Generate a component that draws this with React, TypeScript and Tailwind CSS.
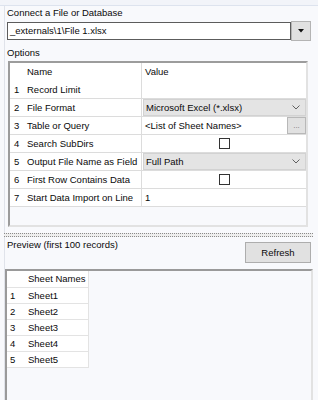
import React from "react";

function Chevron() {
  return (
    <svg width="8" height="5" viewBox="0 0 8 5" className="shrink-0">
      <polyline points="0.5,0.5 4,4 7.5,0.5" fill="none" stroke="#606060" strokeWidth="1" />
    </svg>
  );
}

function Check() {
  return <div className="w-[11px] h-[11px] border border-[#333] bg-white" />;
}

function Combo({ text }: { text: string }) {
  return (
    <div className="ml-[1px] h-[17px] flex-1 flex items-center justify-between bg-[#e4e4e4] border border-[#d2d2d2] pl-[2px] pr-[5px]">
      <span>{text}</span>
      <Chevron />
    </div>
  );
}

const rows: { n: number; name: string; value: React.ReactNode }[] = [
  { n: 1, name: "Record Limit", value: null },
  { n: 2, name: "File Format", value: <Combo text="Microsoft Excel (*.xlsx)" /> },
  {
    n: 3,
    name: "Table or Query",
    value: (
      <div className="flex-1 flex items-start h-full">
        <span className="flex-1 pl-[3px] leading-[17px]">&lt;List of Sheet Names&gt;</span>
        <div className="w-[19px] h-[17px] bg-[#e1e1e1] border border-[#b8b8b8] flex items-center justify-center text-[#777] text-[8px] leading-[8px]">
          ...
        </div>
      </div>
    ),
  },
  {
    n: 4,
    name: "Search SubDirs",
    value: (
      <div className="flex-1 flex justify-center">
        <Check />
      </div>
    ),
  },
  { n: 5, name: "Output File Name as Field", value: <Combo text="Full Path" /> },
  {
    n: 6,
    name: "First Row Contains Data",
    value: (
      <div className="flex-1 flex justify-center">
        <Check />
      </div>
    ),
  },
  { n: 7, name: "Start Data Import on Line", value: <span className="pl-[3px]">1</span> },
];

export default function App() {
  return (
    <div className="w-[318px] h-[400px] overflow-hidden bg-[#f8f9fc] text-[9.5px] leading-[12px] text-[#0a0a0a] font-['Liberation_Sans',Arial,sans-serif]">
      <div className="h-[6px] bg-[#f2f4f9] border-b border-[#dde3ee]" />
      <div className="ml-[4px] border-l border-[#e0e3ea] pl-[2px] h-[394px]">
        <div className="pt-[1px] h-[13px]">Connect a File or Database</div>
        <div className="flex items-start mt-[2px]">
          <div className="mt-[1px] w-[284px] h-[18px] bg-white border border-[#5c5c5c] pl-[2px] flex items-center">
            _externals\1\File 1.xlsx
          </div>
          <div className="w-[20px] h-[20px] bg-[#e1e1e1] border border-[#b4b4b4] flex items-center justify-center">
            <svg width="6" height="4" viewBox="0 0 6 4">
              <polygon points="0,0 6,0 3,3.5" fill="#111" />
            </svg>
          </div>
        </div>
        <div className="mt-[6px] h-[12px]">Options</div>
        <div className="mt-[2px] ml-[1px] w-[300px] h-[166px] border-t-2 border-l-2 border-[#9c9c9c] border-r-2 border-b-2 border-r-[#e2e2e2] border-b-[#e2e2e2] bg-[#f8f9fc]">
          <div className="flex h-[18px] items-center bg-white">
            <div className="w-[15px]" />
            <div className="w-[116px] pl-[2px]">Name</div>
            <div className="w-[1px] h-full bg-[#dcdcdc]" />
            <div className="flex-1 pl-[3px]">Value</div>
          </div>
          {rows.map((r) => (
            <div key={r.n} className="flex h-[18px] items-center bg-white border-b border-[#dcdcdc]">
              <div className="w-[15px] pl-[4px]">{r.n}</div>
              <div className="w-[116px] pl-[2px] whitespace-nowrap overflow-hidden">{r.name}</div>
              <div className="w-[1px] h-full bg-[#dcdcdc]" />
              <div className="flex-1 flex items-center h-full">{r.value}</div>
            </div>
          ))}
        </div>
        <div className="mt-[6px] -ml-[3px] w-[309px] h-[4px] border-t border-b border-dotted border-[#8a8a8a] bg-[#eeeeee]" />
        <div className="mt-[2px] w-[304px] flex justify-between items-start">
          <div>Preview (first 100 records)</div>
          <div className="mt-[3px] w-[66px] h-[21px] bg-[#e1e1e1] border border-[#adadad] flex items-center justify-center">
            Refresh
          </div>
        </div>
        <div className="mt-[6px] -ml-[2px] w-[308px] h-[140px] border-t-2 border-l-2 border-[#9a9a9a] border-r-2 border-r-[#e2e2e2] bg-[#f8f9fc]">
          <div className="w-[82px]">
            <div className="flex h-[17px] items-center bg-white border-b border-[#e3e3e3]">
              <div className="w-[17px]" />
              <div className="flex-1 pl-[4px] h-full flex items-center whitespace-nowrap border-r border-[#e3e3e3]">Sheet Names</div>
            </div>
            {[1, 2, 3, 4, 5].map((i) => (
              <div key={i} className="flex h-[16px] items-center bg-white border-b border-[#e3e3e3]">
                <div className="w-[17px] pl-[3px]">{i}</div>
                <div className="flex-1 pl-[4px] h-full flex items-center border-r border-[#e3e3e3]">Sheet{i}</div>
              </div>
            ))}
          </div>
        </div>
      </div>
    </div>
  );
}
